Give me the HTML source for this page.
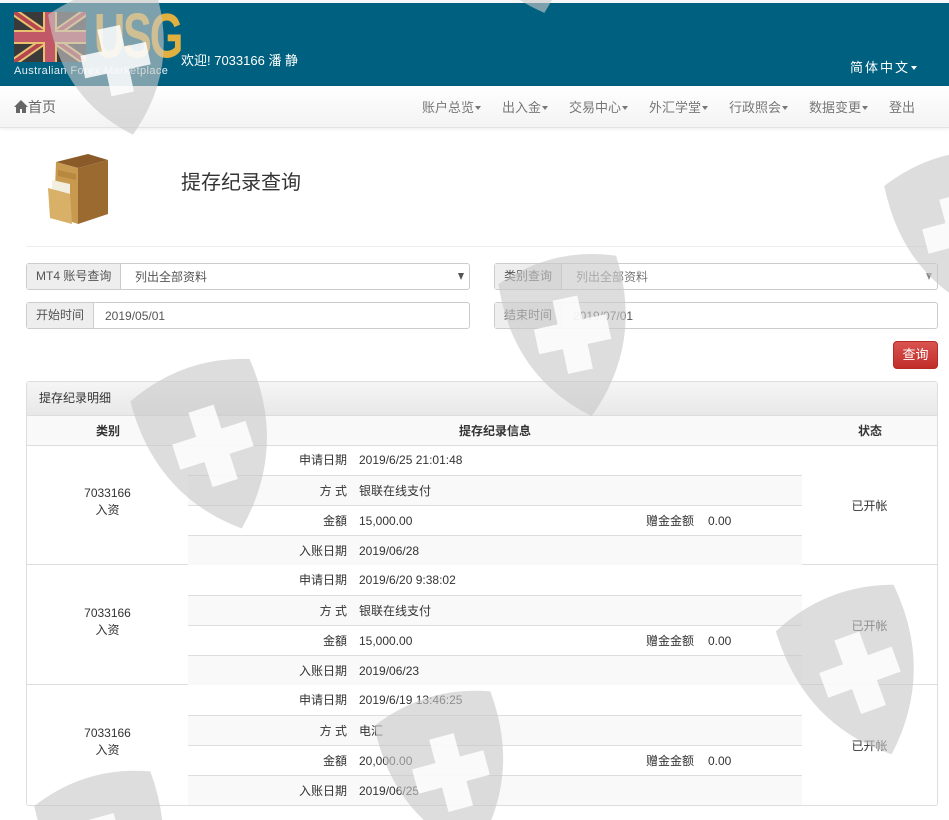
<!DOCTYPE html>
<html><head><meta charset="utf-8">
<style>
*{box-sizing:border-box;margin:0;padding:0}
html,body{width:949px;height:820px;overflow:hidden}
body{background:#fff;font-family:"Liberation Sans","Noto Sans CJK SC",sans-serif;font-size:12px;color:#333;position:relative}
.a{position:absolute}
#hdr{left:0;top:0;width:949px;height:86px;background:#00607f;border-top:3px solid #f4f6f8;}
#nav{left:0;top:86px;width:949px;height:42px;background:linear-gradient(#fff,#f3f3f3);border-bottom:1px solid #e2e2e2;box-shadow:0 1px 4px rgba(0,0,0,.08)}
.nv{position:absolute;top:11px;font-size:13px;color:#777}
.caret{display:inline-block;width:0;height:0;border-left:3.5px solid transparent;border-right:3.5px solid transparent;border-top:4px solid #777;vertical-align:2px;margin-left:1px}
.grp{position:absolute;height:27px;border:1px solid #ccc;border-radius:3px;background:#fff;font-size:12px}
.grp .lb{position:absolute;left:0;top:0;bottom:0;background:#eee;border-right:1px solid #ccc;color:#555;padding:0 9px;line-height:25px}
.grp .v{position:absolute;top:0;line-height:27px;color:#555}
.tri{position:absolute;right:5px;top:9px;width:0;height:0;border-left:3.5px solid transparent;border-right:3.5px solid transparent;border-top:7px solid #555}
#panel{left:26px;top:381px;width:912px;height:425px;border:1px solid #ddd;border-radius:3px}
.row{position:absolute;height:30px;line-height:30px}
</style></head><body>
<div id="hdr" class="a">
  <svg class="a" style="left:14px;top:9px" width="72" height="50" viewBox="0 0 72 50">
    <rect width="72" height="50" fill="#3a3a3a"/>
    <path d="M0 0L72 50M72 0L0 50" stroke="#e8c070" stroke-width="8"/>
    <path d="M0 0L72 50M72 0L0 50" stroke="#b5454f" stroke-width="4"/>
    <path d="M36 0V50M0 25H72" stroke="#e8c070" stroke-width="14"/>
    <path d="M36 0V50M0 25H72" stroke="#c05868" stroke-width="10"/>
  </svg>
  <div class="a" style="left:94px;top:2px;font:bold 60px/60px 'Liberation Sans',sans-serif;color:#e0b040;letter-spacing:-3px;transform:scale(.72,1.05);transform-origin:left top">USG</div>
  <div class="a" style="left:14px;top:62px;font-size:11px;color:#e8eef2;letter-spacing:.4px">Australian Forex Marketplace</div>
  <div class="a" style="left:181px;top:47px;font-size:13px;color:#fff">欢迎! 7033166 潘 静</div>
  <div class="a" style="left:850px;top:54px;font-size:13px;color:#fff;letter-spacing:2px">简体中文<span class="caret" style="border-top-color:#fff"></span></div>
</div>
<div id="nav" class="a">
  <div class="nv" style="left:14px;font-size:14px;color:#666"><svg width="14" height="13" viewBox="0 0 14 13" style="vertical-align:-1px"><path d="M7 0L0 7H2V13H6V9H8V13H12V7H14Z" fill="#666"/></svg>首页</div>
  <div class="nv" style="left:422px">账户总览<span class="caret"></span></div>
  <div class="nv" style="left:502px">出入金<span class="caret"></span></div>
  <div class="nv" style="left:569px">交易中心<span class="caret"></span></div>
  <div class="nv" style="left:649px">外汇学堂<span class="caret"></span></div>
  <div class="nv" style="left:729px">行政照会<span class="caret"></span></div>
  <div class="nv" style="left:809px">数据变更<span class="caret"></span></div>
  <div class="nv" style="left:889px">登出</div>
</div>
<svg class="a" style="left:44px;top:152px" width="66" height="76" viewBox="0 0 66 76">
  <path d="M12 10L44 2L64 8L34 16Z" fill="#8a5a28"/>
  <path d="M34 16L64 8V62L34 72Z" fill="#9a6a30"/>
  <path d="M12 10L34 16V72L10 64Z" fill="#c89a50"/>
  <path d="M4 36L26 42L28 72L6 66Z" fill="#d8b068"/>
  <path d="M8 28L26 32L26 42L8 37Z" fill="#f2eee0"/>
  <path d="M14 18L32 22V28L14 24Z" fill="#b88840"/>
</svg>
<div class="a" style="left:181px;top:166px;font-size:20px;color:#333">提存纪录查询</div>
<div class="a" style="left:26px;top:246px;width:912px;height:1px;background:#eee"></div>

<div class="grp" style="left:26px;top:263px;width:444px"><div class="lb">MT4 账号查询</div><div class="v" style="left:108px">列出全部资料</div><div class="tri"></div></div>
<div class="grp" style="left:26px;top:302px;width:444px"><div class="lb">开始时间</div><div class="v" style="left:78px">2019/05/01</div></div>
<div class="grp" style="left:494px;top:263px;width:444px"><div class="lb">类别查询</div><div class="v" style="left:81px;color:#777">列出全部资料</div><div class="tri" style="border-top-color:#888"></div></div>
<div class="grp" style="left:494px;top:302px;width:444px"><div class="lb">结束时间</div><div class="v" style="left:78px">2019/07/01</div></div>
<div class="a" style="left:893px;top:341px;width:45px;height:28px;background:linear-gradient(#d9534f,#c12e2a);border:1px solid #b52b27;border-radius:4px;color:#fff;font-size:13px;line-height:26px;text-align:center">查询</div>

<div id="panel" class="a">
  <div class="a" style="left:0;top:0;width:910px;height:34px;background:linear-gradient(#f5f5f5,#e8e8e8);border-bottom:1px solid #ddd;padding-left:12px;line-height:33px;color:#333">提存纪录明细</div>
  <div class="a" style="left:0;top:34px;width:910px;height:30px;background:#f9f9f9;border-bottom:1px solid #ddd;font-weight:bold;line-height:30px">
    <span class="a" style="left:69px">类别</span><span class="a" style="left:432px">提存纪录信息</span><span class="a" style="left:831px">状态</span>
  </div>
</div>
<div class="a" style="left:27px;top:445px;width:910px;height:360px">
  <div class="a" style="left:0;top:0;width:910px;height:120px;border-bottom:1px solid #ddd">
    <div class="a" style="left:0;top:40px;width:161px;text-align:center;line-height:17px">7033166<br>入资</div>
    <div class="a" style="left:775px;top:52px;width:135px;text-align:center">已开帐</div>
    <div class="row" style="left:161px;top:0;width:614px"><span class="a" style="right:455px">申请日期</span><span class="a" style="left:171px">2019/6/25 21:01:48</span></div>
    <div class="row" style="left:161px;top:30px;width:614px;background:#f9f9f9;border-top:1px solid #ddd"><span class="a" style="right:455px">方 式</span><span class="a" style="left:171px">银联在线支付</span></div>
    <div class="row" style="left:161px;top:60px;width:614px;border-top:1px solid #ddd"><span class="a" style="right:455px">金額</span><span class="a" style="left:171px">15,000.00</span><span class="a" style="left:458px">赠金金额</span><span class="a" style="left:520px">0.00</span></div>
    <div class="row" style="left:161px;top:90px;width:614px;background:#f9f9f9;border-top:1px solid #ddd"><span class="a" style="right:455px">入账日期</span><span class="a" style="left:171px">2019/06/28</span></div>
  </div>
  <div class="a" style="left:0;top:120px;width:910px;height:120px;border-bottom:1px solid #ddd">
    <div class="a" style="left:0;top:40px;width:161px;text-align:center;line-height:17px">7033166<br>入资</div>
    <div class="a" style="left:775px;top:52px;width:135px;text-align:center">已开帐</div>
    <div class="row" style="left:161px;top:0;width:614px"><span class="a" style="right:455px">申请日期</span><span class="a" style="left:171px">2019/6/20 9:38:02</span></div>
    <div class="row" style="left:161px;top:30px;width:614px;background:#f9f9f9;border-top:1px solid #ddd"><span class="a" style="right:455px">方 式</span><span class="a" style="left:171px">银联在线支付</span></div>
    <div class="row" style="left:161px;top:60px;width:614px;border-top:1px solid #ddd"><span class="a" style="right:455px">金額</span><span class="a" style="left:171px">15,000.00</span><span class="a" style="left:458px">赠金金额</span><span class="a" style="left:520px">0.00</span></div>
    <div class="row" style="left:161px;top:90px;width:614px;background:#f9f9f9;border-top:1px solid #ddd"><span class="a" style="right:455px">入账日期</span><span class="a" style="left:171px">2019/06/23</span></div>
  </div>
  <div class="a" style="left:0;top:240px;width:910px;height:120px">
    <div class="a" style="left:0;top:40px;width:161px;text-align:center;line-height:17px">7033166<br>入资</div>
    <div class="a" style="left:775px;top:52px;width:135px;text-align:center">已开帐</div>
    <div class="row" style="left:161px;top:0;width:614px"><span class="a" style="right:455px">申请日期</span><span class="a" style="left:171px">2019/6/19 13:46:25</span></div>
    <div class="row" style="left:161px;top:30px;width:614px;background:#f9f9f9;border-top:1px solid #ddd"><span class="a" style="right:455px">方 式</span><span class="a" style="left:171px">电汇</span></div>
    <div class="row" style="left:161px;top:60px;width:614px;border-top:1px solid #ddd"><span class="a" style="right:455px">金額</span><span class="a" style="left:171px">20,000.00</span><span class="a" style="left:458px">赠金金额</span><span class="a" style="left:520px">0.00</span></div>
    <div class="row" style="left:161px;top:90px;width:614px;background:#f9f9f9;border-top:1px solid #ddd"><span class="a" style="right:455px">入账日期</span><span class="a" style="left:171px">2019/06/25</span></div>
  </div>
</div>

<svg class="a" style="left:0;top:0;pointer-events:none" width="949" height="820">
  <defs>
    <g id="sh">
      <path d="M0 15Q55 -8 110 12Q118 95 58 150Q-5 100 0 15Z" fill="#c8c8c8" fill-opacity=".62"/>
      <path d="M45 40H68V62H90V85H68V108H45V85H23V62H45Z" fill="#fff" fill-opacity=".85"/>
    </g>
  </defs>
  <use href="#sh" transform="translate(45,0) rotate(-12)"/>
  <use href="#sh" transform="translate(125,385) rotate(-18) scale(1.15)"/>
  <use href="#sh" transform="translate(495,268) rotate(-12) scale(1.1)"/>
  <use href="#sh" transform="translate(880,170) rotate(-15) scale(1.1)"/>
  <use href="#sh" transform="translate(770,615) rotate(-20) scale(1.15)"/>
  <use href="#sh" transform="translate(370,710) rotate(-15) scale(1.1)"/>
  <use href="#sh" transform="translate(30,790) rotate(-15) scale(1.1)"/>
  <use href="#sh" transform="translate(440,-130) rotate(-15) scale(1.1)"/>
</svg>
</body></html>
